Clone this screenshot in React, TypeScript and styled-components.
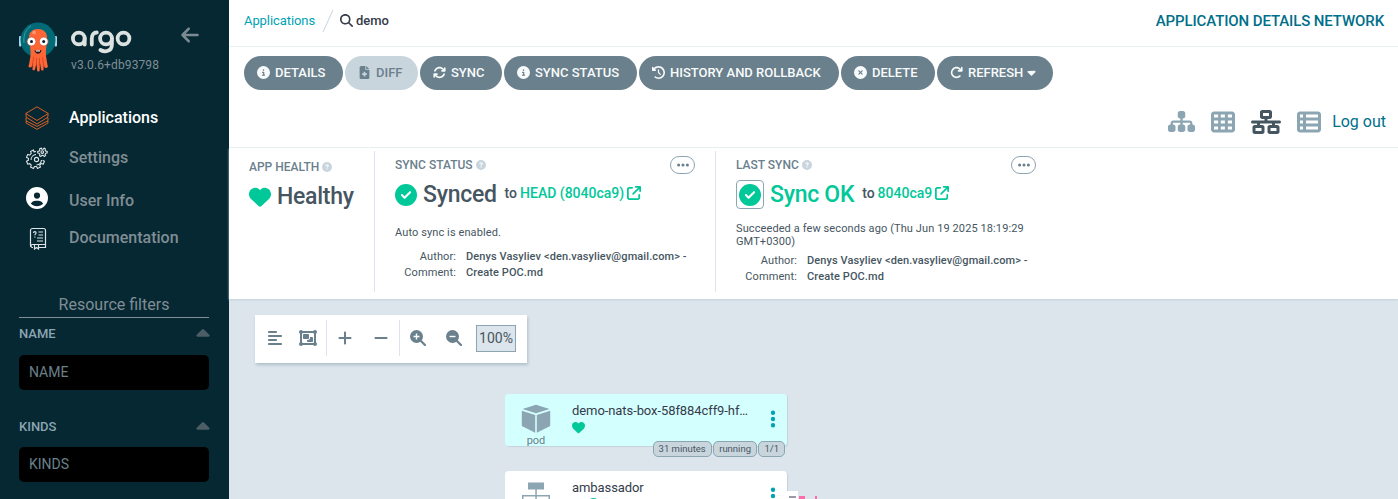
import React from 'react';
import styled, { createGlobalStyle } from 'styled-components';
import {
  FaAlignLeft, FaArrowLeft, FaArrowRotateRight, FaArrowUpRightFromSquare, FaArrowsRotate, FaCaretDown,
  FaCircleCheck, FaCircleInfo, FaCircleQuestion, FaCircleUser, FaCircleXmark, FaClockRotateLeft, FaEllipsis,
  FaEllipsisVertical, FaFileMedical, FaHeart, FaMagnifyingGlass, FaMinus, FaNetworkWired, FaObjectGroup,
  FaPlus, FaSitemap, FaTableCells, FaTableList,
} from 'react-icons/fa6';

const c = {
  nav: '#052833', navText: '#818d94', teal: '#00a2b3', darkTeal: '#006f8a', slate: '#6a808c',
  mute: '#8ca5b2', dark: '#465661', text: '#343b4a', green: '#00c898', line: '#dde5ec',
};

const Global = createGlobalStyle`
  * { box-sizing: border-box; }
  body { margin: 0; font-family: Roboto, "Liberation Sans", sans-serif; font-size: 15px; color: ${c.text}; background: #fff; overflow: hidden; }
  svg { display: block; flex: none; }
`;

const Page = styled.div`display: flex; width: 100%; height: 499px; overflow: hidden;`;

/* Sidebar */
const Sidebar = styled.aside`
  width: 229px; flex: none; padding: 0 20px 0 19px; background: ${c.nav}; color: ${c.navText};
`;
const Brand = styled.div`display: flex; height: 98px; padding-top: 21px;`;
const BrandName = styled.div`
  width: 110px; padding: 3px 0 0 14px;
  svg { margin-bottom: 4px; }
`;
const Version = styled.div`font-size: 12px; line-height: 14px; letter-spacing: 0.12px; font-weight: 400;`;
const Collapse = styled.div`padding: 4px 0 0 13px; font-size: 20px; width: 40px; color: #7d8a92;`;
const NavItem = styled.div<{ $h: number; $active?: boolean }>`
  display: flex; align-items: center; height: ${p => p.$h}px; padding-left: 6px; font-size: 16px; font-weight: 500;
  color: ${p => (p.$active ? '#fff' : c.navText)};
`;
const NavIcon = styled.span<{ $raise?: number }>`
  width: 44px; padding: 0 0 ${p => (p.$raise ?? 0) * 2}px ${p => (p.$raise ? 1 : 0)}px; color: #fff; flex: none;
`;
const NavLabel = styled.span<{ $raise?: number }>`padding-bottom: ${p => (p.$raise ?? 0) * 2}px;`;
const FiltersTitle = styled.div`
  margin-top: 37px; height: 25px; line-height: 24px; text-align: center; font-size: 16px;
  border-bottom: 1px solid ${c.navText};
`;
const FilterHead = styled.div`
  display: flex; justify-content: space-between; align-items: center; height: 30px; margin-right: -1px;
  font-size: 13px; font-weight: 500; color: ${c.mute};
`;
const FilterInput = styled.div<{ $gap: number }>`
  height: 35px; margin-top: ${p => p.$gap}px; padding: 0 10px; line-height: 35px; border-radius: 5px;
  background: #000; color: #6a808c; font-size: 14px;
`;
const FilterGroup = styled.section`height: 93px;`;

/* Main column */
const Main = styled.main`flex: 1; min-width: 0; display: flex; flex-direction: column;`;
const TopBar = styled.header`
  display: flex; justify-content: space-between; align-items: center; height: 47px; padding: 0 14px 5px 15px;
  border-bottom: 1px solid #e8f1f2;
`;
const Crumbs = styled.div`display: flex; align-items: center; font-size: 13px; letter-spacing: -0.08px; color: ${c.teal};
  > svg:nth-of-type(1) { margin: 0 6px 0 7px; }
`;
const Current = styled.span`display: flex; align-items: center; gap: 3px; color: ${c.text}; font-weight: 500;`;
const PageTitle = styled.div`font-size: 15px; font-weight: 500; letter-spacing: -0.11px; color: ${c.darkTeal};`;
const Actions = styled.div`display: flex; gap: 2px; height: 50px; padding: 9px 0 0 15px;`;
const Action = styled.button<{ $w: number; $off?: boolean }>`
  display: flex; align-items: center; width: ${p => p.$w}px; height: 34px; padding: 0 0 2px 13px; border: 0; border-radius: 17px;
  font: 500 13px Roboto, sans-serif; white-space: nowrap;
  background: ${p => (p.$off ? '#c9d5dd' : c.slate)}; color: ${p => (p.$off ? c.slate : '#f8fbfb')};
  span { margin: 0 2px 0 5px; }
`;
const Views = styled.div`
  display: flex; justify-content: flex-end; align-items: center; height: 51px; padding: 0 12px 1px 0; gap: 16px; color: ${c.mute};
  border-bottom: 1px solid #e8f1f2;
`;
const LogOut = styled.span`margin-left: -5px; padding-bottom: 1px; font-size: 16px; color: ${c.darkTeal};`;

const StatusPanel = styled.section`
  position: relative; display: flex; height: 151px; padding: 3px 0 7px; color: ${c.dark}; box-shadow: 0 1px 2px #c2d0d8; z-index: 1;
`;
const StatusCell = styled.div<{ $w: number; $first?: boolean; $last?: boolean }>`
  width: ${p => p.$w}px; padding: ${p => (p.$first ? '7px 0 0 20px' : '5px 20px 0 20px')};
  border-right: ${p => (p.$last ? 0 : 1)}px solid ${c.line};
`;
const CellHead = styled.div`
  display: flex; align-items: center; height: 18px; font-size: 12px; font-weight: 500; color: ${c.slate};
  > svg { margin-left: 3px; color: #c9d5dd; font-size: 10px; }
`;
const More = styled.button`
  display: flex; align-items: center; justify-content: center; margin-left: auto; width: 25px; height: 18px; padding: 0;
  border: 1px solid ${c.mute}; border-radius: 9px; background: #fff; color: ${c.slate}; font-size: 14px;
`;
const Headline = styled.div<{ $ok?: boolean }>`
  display: flex; align-items: center; height: 41px; gap: 6px; font-size: 23px; font-weight: 500; letter-spacing: -0.28px; white-space: nowrap;
  color: ${p => (p.$ok ? c.green : c.dark)};
  > svg { color: ${c.green}; }
`;
const IconBox = styled.span`
  display: flex; align-items: center; justify-content: center; width: 28px; height: 29px; border: 1px solid ${c.mute}; border-radius: 4px; color: ${c.green};
`;
const Revision = styled.span`
  display: flex; align-items: center; gap: 3px; margin: -3px 0 0 2px; font-size: 14px; letter-spacing: 0; color: ${c.dark};
  b { font-weight: 500; color: ${c.green}; }
  svg { color: ${c.green}; }
`;
const Note = styled.div<{ $top: number }>`margin-top: ${p => p.$top}px; font-size: 11px; line-height: 13px; letter-spacing: 0.1px;`;
const Commit = styled.dl<{ $top: number }>`
  display: grid; grid-template-columns: 61px 1fr; column-gap: 10px; margin: ${p => p.$top}px 0 0;
  font-size: 11px; line-height: 16px; letter-spacing: 0.1px; white-space: nowrap;
  dt { text-align: right; } dd { margin: 0; font-weight: 500; }
`;

/* Resource graph */
const Canvas = styled.section`position: relative; flex: 1; background: #dde5ec; padding: 16px 0 0 26px;`;
const GraphBar = styled.div`
  display: flex; align-items: center; width: 272px; height: 48px; padding-bottom: 2px; background: #fff; color: ${c.slate}; box-shadow: 1px 2px 3px #aebfcb;
`;
const Tool = styled.span<{ $w: number; $after?: number }>`
  display: flex; justify-content: center; width: ${p => p.$w}px; margin-right: ${p => p.$after ?? 0}px;
`;
const Rule = styled.i`width: 1px; height: 36px; background: ${c.line};`;
const Percent = styled.span`
  width: 40px; height: 27px; margin-left: 4px; border: 1px solid ${c.mute}; background: #dde5ec; color: ${c.dark}; text-align: center; font-size: 14px; line-height: 25px;
`;
const Node = styled.div<{ $y: number; $selected?: boolean }>`
  position: absolute; left: 276px; top: ${p => p.$y}px; display: flex; width: 282px; height: 52px; border-radius: 4px;
  background: ${p => (p.$selected ? '#d4ffff' : '#fff')}; box-shadow: 1px 1px 1px #c5d2da;
`;
const NodeKind = styled.div`
  display: flex; flex-direction: column; align-items: center; width: 62px; padding-top: 10px; font-size: 11px; line-height: 14px; color: ${c.slate};
`;
const NodeBody = styled.div`
  flex: 1; padding: 9px 0 0 5px; font-size: 13px; line-height: 16px; letter-spacing: -0.08px; white-space: nowrap;
  svg { margin-top: 2px; color: ${c.green}; }
`;
const NodeMenu = styled.div`display: flex; justify-content: center; width: 28px; padding-top: 15px; font-size: 20px; color: ${c.teal};`;
const Tags = styled.div`position: absolute; right: 2px; top: 47px; display: flex; gap: 1.400px;`;
const Tag = styled.span`
  height: 16px; padding: 0 5px; border: 1px solid ${c.mute}; border-radius: 5px; background: #c9d5dd; color: ${c.dark}; font-size: 9.5px; line-height: 14px;
`;
const HealthRow = styled.div`
  display: flex; margin-left: 2px;
  svg:first-child { color: ${c.line}; }
`;
const EdgeMark = styled.svg`position: absolute; left: 558px; top: 190px;`;

const Mascot = () => (
  <svg width="38" height="52" viewBox="0 0 38 52">
    <rect x="0" y="15" width="2.500" height="10.500" rx="1" fill="#a7d4e8" />
    <rect x="35.500" y="15" width="2.500" height="10.500" rx="1" fill="#a7d4e8" />
    <circle cx="19" cy="19" r="17.500" fill="#006b76" />
    <path d="M5 22C4 14 7 8 12 5" fill="none" stroke="#409da0" strokeWidth="1" />
    <path d="M10 16c0-5 4-8 9-8s9 3 9 8c0 7-1.500 13-1 19l1.500 9c1 2 0 3-1.500 3-2 0-2-2-2-5l-.5 6c.5 2-2 2-2.500.5l-1-6.500-.3 7c0 2-2.400 2-2.700 0l-.5-7-1.500 6.500c-.8 1.500-3 1-2.500-1l.5-6c-.5 3-1 5-3 5-1.500 0-2-1-1-3l1.500-8.500c.5-6-1-12-1-19z" fill="#ff6636" />
    <path d="M14.500 36l-1 8M17.500 37v8M20.500 37v8M23.500 36l1 8" stroke="#c83d22" strokeWidth="0.700" />
    <circle cx="15" cy="11.500" r="1.900" fill="#ff9270" />
    <circle cx="12.500" cy="20.500" r="4.400" fill="#fff" stroke="#da4b29" strokeWidth="0.700" />
    <circle cx="24.700" cy="20.500" r="4.400" fill="#fff" stroke="#da4b29" strokeWidth="0.700" />
    <circle cx="12.500" cy="20.500" r="1.500" fill="#08212a" /><circle cx="24.700" cy="20.500" r="1.500" fill="#08212a" />
    <path d="M15.500 29c2 1 5 1 7 0c-.5 5-6.500 5-7 0z" fill="#26191c" /><path d="M16.500 29.500h4.500v1h-4z" fill="#fff" />
  </svg>
);
const Wordmark = () => (
  <svg width="62" height="30" viewBox="0 0 62 30" fill="none" stroke="#dce2e0" strokeWidth="3.800" strokeLinecap="round">
    <circle cx="7.800" cy="14.500" r="5.900" /><path d="M13.700 14.500v6" />
    <path d="M20.800 20.500v-6c0-4 2-6 5-6" />
    <circle cx="35" cy="14.500" r="5.900" /><path d="M40.900 14.500v6c0 7-7 8-11.400 5.500" />
    <circle cx="52.500" cy="14.500" r="5.900" />
  </svg>
);
const LayersIcon = () => (
  <svg width="24" height="24" viewBox="0 0 24 24" fill="none" stroke="#d95f24" strokeWidth="1" strokeLinejoin="round">
    <path d="M12 .8L23.300 7.500 12 14.500.7 7.500zM1 7.500l.1 3.700L12 18l10.900-6.800.1-3.700M2 11.500L1 12v2.800l11 5.600 11-5.600V12l-1-.5M2 15L1 15.500v1.500l11 6.300 11-6.300v-1.500l-1-.5" />
  </svg>
);
const GearsIcon = () => (
  <svg width="23" height="23" viewBox="0 0 23 23" fill="none" stroke="#dfe5e6" strokeWidth="1.100" strokeLinejoin="round">
    <path d="M11 4.500l-2 .4-.5-2-3 1.500.8 2-1.600 1.700-2-.7-1.200 3 1.900.9v2l-1.900 1 1.300 2.900 2-.6 1.500 1.500-.8 2 3 1.300 1-1.900h2l1 1.900 3-1.300-.8-2 1.500-1.600 2 .7 1.200-3-1.800-.9" />
    <circle cx="11.500" cy="12.500" r="2.100" /><path d="M6 13a5.500 5.500 0 0 1 5-5.500M16.500 13a5.500 5.500 0 0 1-5 5" />
    <path d="M16.300 1l.5 1.200h1.500l.8-1.200 1.300.9-.4 1.300.8 1h1.400v1.700l-1.400.3-.7 1.100.5 1.300-1.400.8-1-1h-1.300l-1 1.100-1.400-.8.4-1.400-.8-1-1.400-.3V4.200h1.400l.8-1-.4-1.300z" />
    <circle cx="17.300" cy="5.100" r="1.300" />
  </svg>
);
const BookIcon = () => (
  <svg width="23" height="23" viewBox="0 0 23 23" fill="none" stroke="#dfe5e6" strokeWidth="1.200">
    <path d="M7 20.500H6.500a2 2 0 0 1-2-2v-15a2 2 0 0 1 2-2h11a2 2 0 0 1 2 2v14H6.500a1.500 1.500 0 0 0 0 3M13 20.500h6.500v-3M8.500 18v4l2-1.500 2 1.500v-4" />
    <path d="M7.500 6c0-1.800 2.600-1.800 2.600 0 0 1.200-1.300 1-1.300 2.300M8.800 9.500v1M12.500 5h4.500M12.500 8h4.500M11 11h6M11 14h6" />
  </svg>
);
const Caret = () => <svg width="14" height="8" viewBox="0 0 14 8"><path d="M6 .6q1-1 2 0l5.300 5.100q1 1.800-.8 2H1.500q-1.800-.2-.8-2z" fill="#4c5d66" /></svg>;
const ZoomIcon = ({ plus }: { plus?: boolean }) => (
  <svg width="16" height="16" viewBox="0 0 16 16">
    <circle cx="6.500" cy="6.500" r="6.500" fill={c.slate} /><path d="M10 10l5 5" stroke={c.slate} strokeWidth="2.200" strokeLinecap="round" />
    <path d={plus ? 'M3.500 6.500h6M6.500 3.500v6' : 'M3.500 6.500h6'} stroke="#fff" strokeWidth="1.400" />
  </svg>
);
const PodIcon = () => (
  <svg width="30" height="30" viewBox="0 0 30 30" fill={c.mute}>
    <path d="M15 .8L28.500 5 15 9.300 1.500 5zM.8 6.700L14.200 11v17.800L.8 22zM29.200 6.700L15.800 11v17.800L29.200 22z" />
  </svg>
);
const ServiceIcon = () => (
  <svg width="30" height="30" viewBox="0 0 30 30" fill={c.mute}>
    <path d="M7 1.500h16v7H7zM14.300 8h1.500v6h-1.500zM1 14h28v1.500H1zM1 14h1.500v7H1zM14.300 15h1.500v6h-1.500zM27.500 14H29v7h-1.500zM0 20h6v6H0zM12 20h6v6h-6zM24 20h6v6h-6z" />
  </svg>
);

export default function App() {
  return (
    <>
      <Global />
      <Page>
        <Sidebar>
          <Brand>
            <Mascot />
            <BrandName><Wordmark /><Version>v3.0.6+db93798</Version></BrandName>
            <Collapse><FaArrowLeft /></Collapse>
          </Brand>
          <NavItem $h={40} $active><NavIcon><LayersIcon /></NavIcon><NavLabel $raise={1}>Applications</NavLabel></NavItem>
          <NavItem $h={40}><NavIcon><GearsIcon /></NavIcon><NavLabel $raise={1}>Settings</NavLabel></NavItem>
          <NavItem $h={44}><NavIcon $raise={2}><FaCircleUser size={22} /></NavIcon><NavLabel>User Info</NavLabel></NavItem>
          <NavItem $h={34}><NavIcon $raise={1}><BookIcon /></NavIcon><NavLabel $raise={1.5}>Documentation</NavLabel></NavItem>
          <FiltersTitle>Resource filters</FiltersTitle>
          <FilterGroup><FilterHead>NAME<Caret /></FilterHead><FilterInput $gap={7}>NAME</FilterInput></FilterGroup>
          <FilterGroup><FilterHead>KINDS<Caret /></FilterHead><FilterInput $gap={6}>KINDS</FilterInput></FilterGroup>
        </Sidebar>
        <Main>
          <TopBar>
            <Crumbs>
              Applications
              <svg width="12" height="24" viewBox="0 0 12 24"><path d="M1 23L11 1" stroke="#c9d5dd" /></svg>
              <Current><FaMagnifyingGlass size={13} />demo</Current>
            </Crumbs>
            <PageTitle>APPLICATION DETAILS NETWORK</PageTitle>
          </TopBar>
          <Actions>
            <Action $w={99}><FaCircleInfo /><span>DETAILS</span></Action>
            <Action $w={73} $off><FaFileMedical /><span>DIFF</span></Action>
            <Action $w={82}><FaArrowsRotate /><span>SYNC</span></Action>
            <Action $w={133}><FaCircleInfo /><span>SYNC STATUS</span></Action>
            <Action $w={200}><FaClockRotateLeft /><span>HISTORY AND ROLLBACK</span></Action>
            <Action $w={94}><FaCircleXmark /><span>DELETE</span></Action>
            <Action $w={116}><FaArrowRotateRight /><span>REFRESH</span><FaCaretDown /></Action>
          </Actions>
          <Views>
            <FaSitemap size={27} /><FaTableCells size={24} /><FaNetworkWired size={30} color={c.dark} /><FaTableList size={24} />
            <LogOut>Log out</LogOut>
          </Views>
          <StatusPanel>
            <StatusCell $w={146} $first>
              <CellHead>APP HEALTH<FaCircleQuestion /></CellHead>
              <Headline><FaHeart size={22} />Healthy</Headline>
            </StatusCell>
            <StatusCell $w={341}>
              <CellHead>SYNC STATUS<FaCircleQuestion /><More><FaEllipsis /></More></CellHead>
              <Headline><FaCircleCheck size={22} />Synced<Revision>to <b>HEAD (8040ca9)</b><FaArrowUpRightFromSquare /></Revision></Headline>
              <Note $top={11}>Auto sync is enabled.</Note>
              <Commit $top={10}><dt>Author:</dt><dd>Denys Vasyliev &lt;den.vasyliev@gmail.com&gt; -</dd><dt>Comment:</dt><dd>Create POC.md</dd></Commit>
            </StatusCell>
            <StatusCell $w={340} $last>
              <CellHead>LAST SYNC<FaCircleQuestion /><More><FaEllipsis /></More></CellHead>
              <Headline $ok><IconBox><FaCircleCheck size={22} /></IconBox>Sync OK<Revision>to <b>8040ca9</b><FaArrowUpRightFromSquare /></Revision></Headline>
              <Note $top={7}>Succeeded a few seconds ago (Thu Jun 19 2025 18:19:29 GMT+0300)</Note>
              <Commit $top={5}><dt>Author:</dt><dd>Denys Vasyliev &lt;den.vasyliev@gmail.com&gt; -</dd><dt>Comment:</dt><dd>Create POC.md</dd></Commit>
            </StatusCell>
          </StatusPanel>
          <Canvas>
            <GraphBar>
              <Tool $w={40}><FaAlignLeft size={16} /></Tool><Tool $w={26} $after={5}><FaObjectGroup size={18} /></Tool><Rule />
              <Tool $w={36}><FaPlus size={16} /></Tool><Tool $w={36}><FaMinus size={16} /></Tool><Rule />
              <Tool $w={36}><ZoomIcon plus /></Tool><Tool $w={36}><ZoomIcon /></Tool>
              <Percent>100%</Percent>
            </GraphBar>
            <Node $y={95} $selected>
              <NodeKind><PodIcon />pod</NodeKind>
              <NodeBody>demo-nats-box-58f884cff9-hf…<FaHeart size={13} /></NodeBody>
              <NodeMenu><FaEllipsisVertical /></NodeMenu>
              <Tags><Tag>31 minutes</Tag><Tag>running</Tag><Tag>1/1</Tag></Tags>
            </Node>
            <Node $y={172}>
              <NodeKind><ServiceIcon /></NodeKind>
              <NodeBody>ambassador<HealthRow><FaHeart size={13} /><FaCircleCheck size={13} /></HealthRow></NodeBody>
              <NodeMenu><FaEllipsisVertical /></NodeMenu>
            </Node>
            <EdgeMark width="40" height="10" viewBox="0 0 40 10">
              <path d="M0 2h11v8H0z" fill="#fff" /><path d="M2 7h7v2H2z" fill="#9a9aa8" /><path d="M12 7h6v3h-6zM28 7h2v3h-2z" fill="#ff6cad" />
            </EdgeMark>
          </Canvas>
        </Main>
      </Page>
    </>
  );
}
